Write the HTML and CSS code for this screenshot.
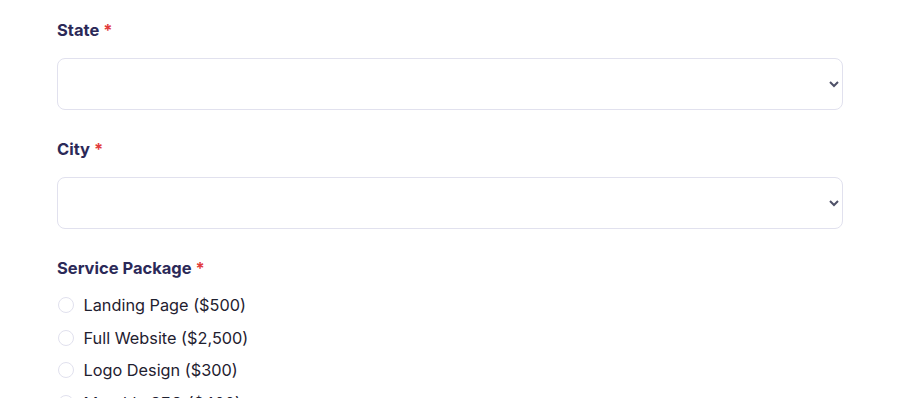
FILE: index.html
```html
<!DOCTYPE html>
<html lang="en">
<head>
    <meta charset="UTF-8">
    <meta name="viewport" content="width=device-width, initial-scale=1.0">
    <title>Order Form</title>
    <link rel="stylesheet" href="styles.css">
</head>
<body>
    <form class="order-form">
        <div class="field">
            <label class="field-label" for="state">State <span class="required">*</span></label>
            <select class="field-select" id="state" name="state">
                <option value=""></option>
            </select>
        </div>

        <div class="field">
            <label class="field-label" for="city">City <span class="required">*</span></label>
            <select class="field-select" id="city" name="city">
                <option value=""></option>
            </select>
        </div>

        <div class="field">
            <div class="field-label">Service Package <span class="required">*</span></div>
            <div class="radio-list">
                <label class="radio-option"><input type="radio" name="package" value="landing"> Landing Page ($500)</label>
                <label class="radio-option"><input type="radio" name="package" value="website"> Full Website ($2,500)</label>
                <label class="radio-option"><input type="radio" name="package" value="logo"> Logo Design ($300)</label>
                <label class="radio-option"><input type="radio" name="package" value="seo"> Monthly SEO ($400)</label>
            </div>
        </div>
    </form>
</body>
</html>
```

FILE: styles.css
```css
body {
    font-family: Inter, 'Noto Sans', sans-serif;
    margin: 0;
    background: #ffffff;
    color: #1f2130;
}

.order-form {
    width: 786px;
    padding: 16.5px 0 0 57px;
}

.field {
    margin-bottom: 25.5px;
}

.field-label {
    display: block;
    font-size: 16.5px;
    font-weight: 650;
    line-height: 27px;
    color: #2b2958;
    margin-bottom: 14.5px;
}

.required {
    color: #e23c3c;
}

.field-select {
    display: block;
    width: 100%;
    height: 52px;
    border: 1px solid #e1e1ee;
    border-radius: 8px;
    background: #ffffff;
    color: #4f5168;
    font-family: inherit;
    font-size: 16px;
    padding: 0 14px;
}

.field .field-label + .radio-list {
    margin-top: -3px;
}

.radio-list {
    display: flex;
    flex-direction: column;
    gap: 8.5px;
}

.radio-option {
    display: flex;
    align-items: center;
    gap: 10px;
    font-size: 16.3px;
    line-height: 24px;
    color: #1f2130;
}

.radio-option input {
    appearance: none;
    width: 16px;
    height: 16px;
    margin: 0 0 0 0.5px;
    border: 1px solid #e1e1ee;
    border-radius: 50%;
    background: #ffffff;
}
```
